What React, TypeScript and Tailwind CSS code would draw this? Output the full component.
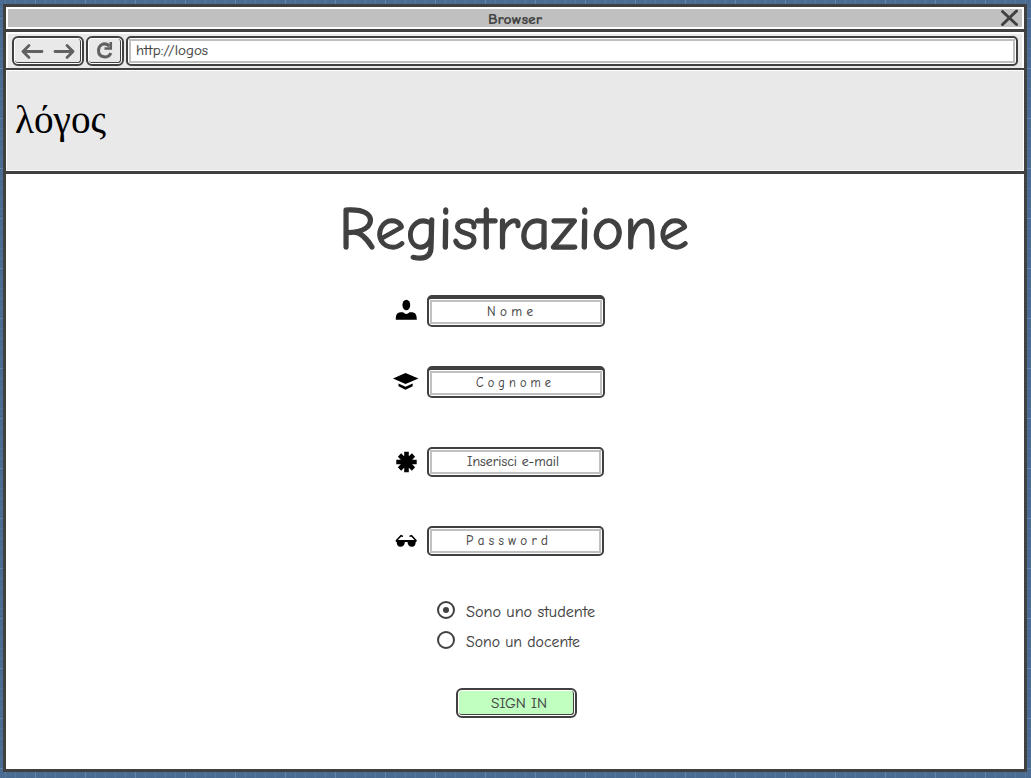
import React from "react";

const hand = "font-['Comic_Sans_MS','Comic_Neue','Noto_Sans',sans-serif]";

function Label({ text, width, className, weight = 0.12 }: { text: string; width: number; className: string; weight?: number }) {
  return (
    <svg className={`block shrink-0 overflow-visible ${className}`} style={{ width }} fill="currentColor" stroke="currentColor" strokeWidth={weight} strokeLinejoin="round">
      <text x="0" y="0" dominantBaseline="alphabetic" textLength={width} lengthAdjust="spacingAndGlyphs">{text}</text>
    </svg>
  );
}

function Person() {
  return (
    <svg className="-mt-[2px]" width="24" height="24" viewBox="0 0 24 24">
      <ellipse cx="12.300" cy="7" rx="3.900" ry="5.300" />
      <path d="M1.800 21.700c0-4.500 1-6.700 3.500-7.200c1.500-.3 3-.4 3.800-.2q1.400 1.700 3.200 1.700q1.800 0 3.200-1.700c1-.2 2.500-.1 3.800.2c2.700.6 3.500 3 3.500 7.200Z" />
    </svg>
  );
}

function Cap() {
  return (
    <svg className="-mt-[2px]" width="26" height="18" viewBox="0 0 26 18">
      <path d="M0 6.500L12.500 1L25.500 6.500L12.500 12Z" />
      <path d="M5.500 11.500v2.800l7 3.400l7.200-3.400v-2.800l-7.200 3.300Z" />
    </svg>
  );
}

function Asterisk() {
  return (
    <svg width="22" height="22" viewBox="0 0 22 22" stroke="black" strokeWidth="4.600">
      <path d="M11.500 .8v20.400M1.300 11h20.400M4.500 4l14 14M18.500 4L4.500 18" />
    </svg>
  );
}

function Glasses() {
  return (
    <svg width="22" height="14" viewBox="0 0 22 14">
      <path d="M1.500 6.500L6 1.700l2 .7M21 6.500l-4.500-4.800l-2 .7" fill="none" stroke="black" strokeWidth="1.500" />
      <path d="M.7 6h21v1.600l-1 .4c0 3-1.300 4.800-3.700 4.800c-2.900 0-4.200-1.800-4.500-4.800h-2.600c-.3 3-1.600 4.800-4.500 4.800c-2.400 0-3.700-1.800-3.700-4.800l-1-.4Z" />
    </svg>
  );
}

type FieldProps = {
  icon: React.ReactNode;
  text: string;
  width: number;
  box: string;
  pad: string;
  row: string;
};

function Field({ icon, text, width, box, pad, row }: FieldProps) {
  return (
    <div className={`flex shrink-0 items-center ${row}`}>
      <div className="flex w-[42px] justify-center">{icon}</div>
      <div className={`flex rounded-[5px] border-2 border-[#404040] p-px ${box}`}>
        <div className={`flex flex-1 items-center border-2 border-[#c0c0c0] ${pad}`}>
          <Label text={text} width={width} className="mt-[8px] h-px text-[14px]" />
        </div>
      </div>
    </div>
  );
}

function Radio({ text, width, checked }: { text: string; width: number; checked?: boolean }) {
  return (
    <div className="flex h-[30px] items-center">
      <div className="flex size-[18px] items-center justify-center rounded-full border-2 border-[#404040]">
        {checked && <div className="size-[6px] rounded-full bg-[#404040]" />}
      </div>
      <Label text={text} width={width} className="ml-[10.500px] mt-[14px] h-px text-[16px]" />
    </div>
  );
}

export default function App() {
  return (
    <div className={`h-[778px] w-[1031px] overflow-hidden bg-[#4a6c92] bg-[linear-gradient(to_right,#6484a9_1px,transparent_1px),linear-gradient(to_bottom,#6484a9_1px,transparent_1px),linear-gradient(to_right,#56779c_1px,transparent_1px),linear-gradient(to_bottom,#56779c_1px,transparent_1px)] bg-[size:50px_50px,50px_50px,10px_10px,10px_10px] bg-[position:35px_18px,35px_18px,5px_8px,5px_8px] pl-[3px] pt-[4px] text-[#404040] ${hand}`}>
      <div className="flex h-[768px] w-[1024px] flex-col border-[3px] border-[#404040] bg-white">
        <div className="flex h-[22px] shrink-0 p-[2px]">
          <div className="flex flex-1 items-center bg-[#c0c0c0] pl-[480px]">
            <Label text="Browser" width={54} className="mt-[12px] h-px text-[14px] font-bold" />
            <svg className="ml-auto mr-[3px]" width="19" height="18" viewBox="0 0 19 18" fill="none" stroke="#404040" strokeWidth="3" strokeLinecap="round">
              <path d="M2.500 2.500L16.500 15.500M16.500 2L2.500 15.500" />
            </svg>
          </div>
        </div>
        <div className="h-[3px] shrink-0 bg-[#404040]" />
        <div className="h-[36px] shrink-0 px-[2px] pt-[2px]">
          <div className="flex h-[34px] gap-[2px] bg-[#e9e9e9] pl-[4px] pt-[2px]">
            <div className="flex h-[30px] w-[72px] rounded-[6px] border-2 border-[#404040] bg-white p-px">
              <div className="flex flex-1 items-center justify-center rounded-[3px] border-b border-r border-[#404040] bg-[#e9e9e9]">
                <svg width="54" height="18" viewBox="0 0 54 18" fill="none" stroke="#606060" strokeWidth="2.800" strokeLinecap="round" strokeLinejoin="round">
                  <path d="M21 9.500H2M8 3.500L2 9.500l6 6M34 9.500h18M46 3.500L52 9.500l-6 6" />
                </svg>
              </div>
            </div>
            <div className="flex h-[30px] w-[38px] rounded-[6px] border-2 border-[#404040] bg-white p-px">
              <div className="flex flex-1 items-center justify-center rounded-[3px] border-b border-r border-[#404040] bg-[#e9e9e9]">
                <svg className="-mt-px" width="18" height="20" viewBox="0 0 18 20" fill="none" stroke="#606060" strokeWidth="3">
                  <path d="M13.500 6C8 1.500 2.500 5 2.500 10.500c0 7.500 10 8.500 12.300 2.500" />
                  <path d="M14.800 2v6.500H8.500" strokeWidth="2.500" />
                </svg>
              </div>
            </div>
            <div className="flex h-[30px] w-[892px] rounded-[5px] border-2 border-[#404040] bg-white p-px">
              <div className="flex flex-1 items-center border-2 border-[#c0c0c0] pl-[5px]">
                <Label text="http://logos" width={72} className="mt-[8px] h-px text-[14px]" />
              </div>
            </div>
          </div>
        </div>
        <div className="h-[2px] shrink-0 bg-[#404040]" />
        <div className="h-[101px] shrink-0 border border-white bg-[#e9e9e9] pl-[8px] pt-[62px] text-black">
          <Label text="λόγος" width={91} className="h-px font-['Liberation_Serif',serif] text-[39px]" weight={0} />
        </div>
        <div className="h-[3px] shrink-0 bg-[#404040]" />
        <div className="flex flex-1 flex-col">
          <div className="h-[121px] pl-[333px] pt-[75px]">
            <Label text="Registrazione" width={350} className="h-px text-[60px]" weight={1.3} />
          </div>
          <div className="flex flex-col pl-[379px]">
            <Field icon={<Person />} text="N o m e" width={46} row="h-[32px]" box="h-[32px] w-[178px] border-t-[4px]" pad="pl-[55px]" />
            <Field icon={<Cap />} text="C o g n o m e" width={75} row="mt-[39px] h-[32px]" box="h-[32px] w-[178px] border-t-[4px]" pad="pl-[44px]" />
            <Field icon={<Asterisk />} text="Inserisci e-mail" width={92} row="mt-[49px] h-[30px]" box="h-[30px] w-[177px]" pad="pl-[35px]" />
            <Field icon={<Glasses />} text="P a s s w o r d" width={82} row="mt-[49px] h-[30px]" box="h-[30px] w-[177px]" pad="pl-[34px]" />
          </div>
          <div className="mt-[39px] flex flex-col pl-[431px]">
            <Radio text="Sono uno studente" width={129} checked />
            <Radio text="Sono un docente" width={114} />
          </div>
          <div className="ml-[450px] mt-[33px] flex h-[30px] w-[121px] rounded-[6px] border-2 border-[#404040] bg-white p-px">
            <div className="flex flex-1 items-center rounded-[3px] border-b border-r border-[#404040] bg-[#c0ffc0] pl-[32px]">
              <Label text="SIGN IN" width={56} className="mt-[11px] h-px text-[14px]" />
            </div>
          </div>
        </div>
      </div>
    </div>
  );
}
